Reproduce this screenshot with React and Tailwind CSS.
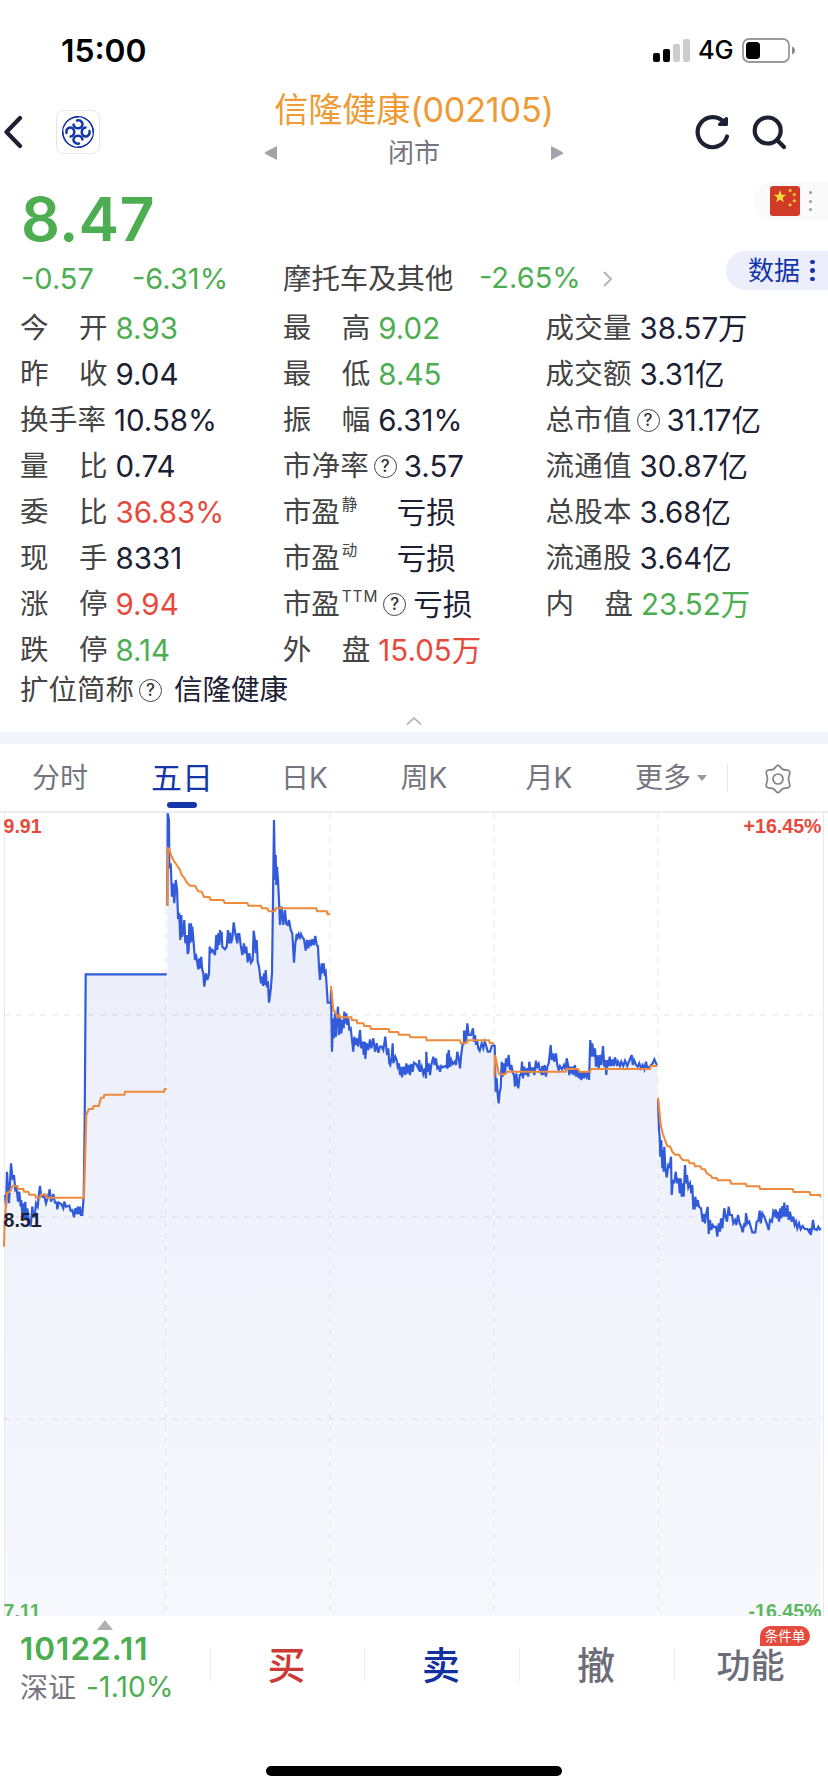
import clsx from 'clsx';

const GREEN = 'text-[#4cae50]';
const RED = 'text-[#e64a3c]';
const DARK = 'text-[#1c2033]';

const columns = [
  [
    { label: '今开', value: '8.93', tone: GREEN },
    { label: '昨收', value: '9.04', tone: DARK },
    { label: '换手率', value: '10.58%', tone: DARK },
    { label: '量比', value: '0.74', tone: DARK },
    { label: '委比', value: '36.83%', tone: RED },
    { label: '现手', value: '8331', tone: DARK },
    { label: '涨停', value: '9.94', tone: RED },
    { label: '跌停', value: '8.14', tone: GREEN }
  ],
  [
    { label: '最高', value: '9.02', tone: GREEN },
    { label: '最低', value: '8.45', tone: GREEN },
    { label: '振幅', value: '6.31%', tone: DARK },
    { label: '市净率', value: '3.57', tone: DARK, help: true },
    { label: '市盈', sup: '静', value: '亏损', tone: DARK },
    { label: '市盈', sup: '动', value: '亏损', tone: DARK },
    { label: '市盈', sup: 'TTM', value: '亏损', tone: DARK, help: true },
    { label: '外盘', value: '15.05万', tone: RED }
  ],
  [
    { label: '成交量', value: '38.57万', tone: DARK },
    { label: '成交额', value: '3.31亿', tone: DARK },
    { label: '总市值', value: '31.17亿', tone: DARK, help: true },
    { label: '流通值', value: '30.87亿', tone: DARK },
    { label: '总股本', value: '3.68亿', tone: DARK },
    { label: '流通股', value: '3.64亿', tone: DARK },
    { label: '内盘', value: '23.52万', tone: GREEN }
  ]
];

// Each day has its own origin, points are in thirds of a pixel
const days = [
  {
    x: 0, y: 1020,
    price: '15,525 18,560 21,455 27,550 33,430 38,480 42,465 46,510 50,505 54,545 58,515 62,560 64,540 67,580 70,550 73,595 76,545 79,600 82,565 86,598 90,600 92,620 97,560 100,590 104,590 108,550 113,560 117,520 120,498 123,525 128,530 132,525 138,550 144,530 149,508 153,545 157,535 160,522 165,548 170,548 172,568 176,548 184,552 190,565 193,545 198,560 208,557 212,572 217,570 222,592 226,565 230,582 233,560 237,583 240,560 243,585 247,585 251,530 254,300 257,-137 500,-137',
    avg: '12,680 14,600 21,518 30,515 33,508 38,498 52,498 54,507 70,507 72,515 85,515 88,524 105,524 108,533 120,533 122,524 138,524 140,533 252,533 259,285 266,267 278,267 281,258 296,258 303,233 311,233 313,224 373,224 375,215 492,215 494,207 500,207'
  },
  {
    x: 0, y: 800,
    price: '502,318 503,40 507,60 508,205 512,190 516,290 519,250 523,310 527,240 531,265 534,350 538,345 541,420 544,345 546,410 550,395 553,360 556,430 560,405 563,462 566,450 568,370 570,430 573,370 575,425 577,380 581,430 585,480 589,470 595,508 598,475 601,505 604,470 606,505 610,520 613,560 618,520 622,540 627,522 629,440 634,455 638,450 645,465 649,405 652,450 655,400 658,435 660,390 662,425 665,395 667,440 675,448 680,440 684,390 687,430 690,398 693,430 697,415 701,367 706,400 712,430 714,402 718,402 722,435 727,465 732,430 735,460 739,440 743,487 748,460 753,488 758,480 761,392 764,415 767,460 770,420 773,485 777,500 783,550 786,530 789,558 792,520 795,555 797,510 800,555 804,550 807,608 812,570 816,520 819,300 822,60 825,240 827,165 829,255 831,200 834,240 838,320 840,375 845,320 850,375 855,330 859,372 863,375 867,360 872,390 877,400 882,488 886,430 890,402 893,412 896,402 900,412 903,402 907,412 912,418 917,452 921,420 925,445 929,420 933,438 937,418 941,435 946,408 950,435 954,440 957,500 960,540 965,490 968,520 971,490 974,520 977,515 980,560 983,608 992,608',
    avg: '502,318 504,145 508,147 513,165 520,180 530,195 540,210 545,225 552,232 560,247 570,257 585,257 590,266 595,274 605,275 612,291 628,291 632,300 670,300 674,309 742,309 746,317 782,317 786,325 802,325 806,334 824,334 827,325 949,325 952,334 980,334 983,343 991,343'
  },
  {
    x: 310, y: 960,
    price: '62,130 63,90 66,275 69,175 72,235 75,160 78,230 80,180 84,140 87,225 91,175 94,220 98,180 101,205 103,155 106,190 109,160 112,195 115,175 118,208 122,205 126,240 130,275 133,230 137,255 141,235 145,260 150,210 154,265 158,245 161,285 165,245 166,297 170,250 175,270 180,238 184,265 190,235 195,275 200,250 205,278 210,260 215,260 220,270 226,230 231,285 235,265 238,310 241,315 245,290 248,250 250,310 256,290 260,300 263,320 267,310 270,345 274,320 276,352 281,320 286,345 289,310 292,340 296,315 300,345 304,312 308,335 312,308 318,312 325,325 328,300 330,335 335,320 340,342 345,325 348,355 349,275 352,335 356,310 360,345 364,315 370,290 374,315 378,295 382,325 386,320 390,335 394,318 399,322 405,318 410,322 412,280 414,325 416,270 420,320 424,300 428,312 434,305 438,315 442,275 447,300 450,325 453,290 458,250 462,250 462,215 468,215 468,245 472,190 476,225 483,225 489,205 492,245 495,225 498,255 501,240 505,265 509,272 515,250 520,265 524,245 528,255 533,275 540,275 545,258 554,255',
    avg: '63,78 66,110 70,150 77,158 82,172 88,165 92,172 124,172 126,181 140,181 142,190 160,190 163,198 180,198 184,207 236,207 238,216 264,216 267,224 298,224 301,232 348,232 350,241 450,241 452,249 470,249 473,241 537,241 540,250 552,250'
  },
  {
    x: 310, y: 960,
    price: '554,255 557,395 560,355 563,405 566,430 569,395 572,385 575,305 578,350 581,310 585,345 588,295 592,320 596,285 600,330 604,315 609,340 612,345 615,380 619,340 622,370 625,385 629,345 633,345 636,305 639,355 643,320 648,345 652,325 655,350 658,305 662,338 666,325 670,325 673,345 678,302 682,320 686,312 690,335 694,340 697,318 700,345 704,315 708,350 712,320 716,310 719,285 722,255 725,300 729,280 733,305 738,280 742,315 746,330 750,318 756,328 762,315 767,330 770,295 774,315 778,345 781,320 785,340 788,320 790,345 795,315 798,350 803,330 807,355 810,335 814,360 818,335 822,355 826,335 830,350 835,335 837,360 841,240 844,290 847,250 851,290 855,265 858,320 862,285 866,325 870,285 874,315 879,258 883,320 886,300 889,345 892,300 895,320 899,290 903,318 908,298 911,318 915,292 921,318 924,305 930,318 934,305 940,318 945,302 952,318 958,302 965,285 968,315 972,300 978,315 983,320 988,310 993,325 998,315 1003,328 1008,305 1012,325 1020,318 1028,310 1033,298 1038,310 1042,315',
    avg: '553,350 555,285 560,310 567,343 586,343 590,335 767,335 769,327 805,327 808,335 840,335 843,327 1020,327 1022,318 1042,318'
  },
  {
    x: 600, y: 1050,
    price: '174,150 177,240 179,260 181,320 184,270 187,355 189,300 191,365 193,290 196,350 200,382 205,345 209,350 213,320 215,435 219,390 223,400 227,365 232,400 236,385 239,430 242,385 245,440 248,400 251,440 255,345 258,400 261,375 265,412 270,400 274,430 277,405 280,475 284,475 286,440 290,470 293,450 297,470 303,475 308,515 312,492 315,520 319,490 323,470 326,552 330,510 334,540 338,525 343,532 348,530 352,560 356,520 360,545 363,505 367,535 373,475 377,500 381,515 386,470 390,495 396,495 400,520 405,510 409,525 414,495 419,520 424,530 428,547 433,520 436,530 438,490 443,520 448,515 452,530 457,547 466,547 470,515 475,512 479,482 482,520 487,490 493,500 500,520 506,540 510,510 516,515 520,485 524,495 527,478 531,505 534,485 537,515 541,475 544,505 547,468 550,500 553,458 556,500 559,475 562,500 562,465 566,510 570,485 575,515 580,500 584,525 588,515 592,535 597,520 602,538 608,528 614,537 622,537 627,545 631,535 632,555 636,535 639,510 643,537 650,540 655,530 659,538 663,535',
    avg: '174,143 178,180 182,225 188,250 195,270 202,288 211,290 217,305 225,314 238,314 242,323 249,331 265,331 269,340 282,340 285,349 301,349 305,357 314,358 320,370 334,378 336,384 350,384 353,391 390,391 394,401 437,401 440,409 478,409 481,417 578,417 581,426 628,426 632,435 660,435 662,442'
  }
];

const toPixels = (day, points) =>
  points.split(' ').map((p) => {
    const [x, y] = p.split(',').map(Number);
    return [day.x + x / 3, day.y + y / 3];
  });

const linePath = (pts) => 'M' + pts.map(([x, y]) => `${x.toFixed(1)} ${y.toFixed(1)}`).join('L');

const areaPath = (pts) => `${linePath(pts)}V1616H${pts[0][0].toFixed(1)}Z`;

const HelpIcon = ({ className }) => (
  <span className={clsx('flex size-[23px] shrink-0 items-center justify-center rounded-full border border-[#444] text-[17px] leading-none font-medium text-[#333]', className)}>
    ?
  </span>
);

const StatusBar = () => (
  <div className="flex h-[88px] items-center justify-between pt-3 pr-[33px] pl-[61px]">
    <span className="pt-0.5 text-[31.800px] leading-none font-semibold text-black">15:00</span>
    <div className="flex items-center">
      <svg className="h-6 w-[38px]" viewBox="0 0 38 24">
        <rect x="0" y="15" width="7" height="9" rx="2" fill="#000" />
        <rect x="10" y="11" width="7" height="13" rx="2" fill="#000" />
        <rect x="20" y="6" width="7" height="18" rx="2" fill="#ccc" />
        <rect x="30" y="1" width="7" height="23" rx="2" fill="#ccc" />
      </svg>
      <span className="ml-[7px] w-[36px] text-[25.500px] leading-none font-medium tracking-[-0.300px] text-black">4G</span>
      <svg className="ml-2 h-[25px] w-[53px]" viewBox="0 0 53 25">
        <rect x="1" y="1" width="46" height="23" rx="6" fill="none" stroke="#999" strokeWidth="1.8" />
        <rect x="4" y="4" width="14" height="17" rx="3.5" fill="#000" />
        <path d="M50 8.5c2 .8 3 2.2 3 4s-1 3.200-3 4z" fill="#888" />
      </svg>
    </div>
  </div>
);

const BrokerLogo = () => (
  <div className="flex size-11 items-center justify-center rounded-lg border border-[#e6e6e8]">
    <svg className="size-[34px]" viewBox="-17 -17 34 34" fill="none" stroke="#1536a8" strokeLinecap="round">
      <circle r="15.400" strokeWidth="1.200" />
      {[0, 90, 180, 270].map((angle) => (
        <g key={angle} transform={`rotate(${angle})`}>
          <path d="M-14.500-5A15.300 15.300 0 0 1 1-15.300A17 17 0 0 0-14.500-5Z" fill="#1536a8" strokeWidth="1" />
          <path d="M-1-11.500C3.500-12.500 6-8 3.500-5.200C1-2.600-4-3.500-4.500-7.500" strokeWidth="2.400" />
        </g>
      ))}
    </svg>
  </div>
);

const Header = () => (
  <div className="flex h-[88px] items-start pr-[41px] pl-1">
    <div className="flex w-[261px] items-center pt-[22px]">
      <svg className="h-[34px] w-5" viewBox="0 0 20 34" fill="none" stroke="#1c2033" strokeWidth="4.200" strokeLinecap="round" strokeLinejoin="round">
        <path d="M16 3L2.500 17L16 31" />
      </svg>
      <div className="ml-8"><BrokerLogo /></div>
    </div>
    <div className="flex w-[298px] flex-col items-center">
      <h1 className="h-11 text-[34.200px] leading-[44px] tracking-[-0.200px] whitespace-nowrap text-[#ee9a35]">信隆健康(002105)</h1>
      <div className="flex h-[41px] w-full items-center justify-between">
        <svg className="h-[14px] w-3" viewBox="0 0 12 14"><path d="M12 0V14L.5 8Q-.5 7 .5 6Z" fill="#a3a4ab" /></svg>
        <span className="text-[26px] leading-none text-[#75757f]">闭市</span>
        <svg className="h-[14px] w-3" viewBox="0 0 12 14"><path d="M0 0V14L11.500 8Q12.500 7 11.500 6Z" fill="#a3a4ab" /></svg>
      </div>
    </div>
    <div className="flex w-[224px] items-center justify-end gap-[20px] pt-[26px]">
      <svg className="size-[36px]" viewBox="0 0 36 36" fill="none" stroke="#1c2033" strokeWidth="4.200" strokeLinecap="round" strokeLinejoin="round">
        <path d="M32 22.500A15 15 0 1 1 29.500 9" />
        <path d="M31.500 4.500V10.500H24.500Z" fill="#1c2033" strokeWidth="3" />
      </svg>
      <svg className="size-[36px]" viewBox="0 0 36 36" fill="none" stroke="#1c2033" strokeWidth="4.200" strokeLinecap="round">
        <circle cx="16.700" cy="16.500" r="13" />
        <path d="M26.500 26.500L33 33" />
      </svg>
    </div>
  </div>
);

const Flag = () => (
  <svg className="size-[30px]" viewBox="0 0 30 30">
    <rect width="30" height="30" rx="3" fill="#d13a26" />
    <path d="M10 4L11.600 8.800H16.200L12.500 11.700L13.900 16.200L10 13.400L6.100 16.200L7.500 11.700L3.800 8.800H8.400Z" fill="#fbdc3c" />
    <g fill="#f8cf3a">
      <path id="star" d="M20 2.300L20.700 3.700L22.200 3.600L21.200 4.800L21.700 6.200L20.200 5.600L19 6.500L19.100 5L17.900 4.100L19.400 3.800Z" />
      <use href="#star" x="4.200" y="4" />
      <use href="#star" x="4.200" y="10.200" />
      <use href="#star" y="14.300" />
    </g>
  </svg>
);

const Dots = ({ className }) => (
  <div className="flex flex-col">
    {[0, 1, 2].map((i) => <span key={i} className={clsx('rounded-full', className)} />)}
  </div>
);

const Summary = () => (
  <div className="flex h-[129px] justify-between">
    <div className="pt-1.5 pl-[21px]">
      <div className={clsx('h-[74px] text-[61px] leading-[74px] font-semibold tracking-[0.2px]', GREEN)}>8.47</div>
      <div className="flex h-[46px] text-[29px] leading-[46px]">
        <span className={clsx('w-[111px]', GREEN)}>-0.57</span>
        <span className={clsx('w-[151px]', GREEN)}>-6.31%</span>
        <span className="w-[196px] text-[28.400px] whitespace-nowrap text-[#444]">摩托车及其他</span>
        <span className={clsx('-mt-px w-[124px]', GREEN)}>-2.65%</span>
        <svg className="mt-[14px] h-[18px] w-[10px]" viewBox="0 0 10 18" fill="none" stroke="#b5b5b8" strokeWidth="2">
          <path d="M1 2L8 9L1 16" />
        </svg>
      </div>
    </div>
    <div className="flex flex-col items-end pt-1.5">
      <div className="flex h-[38px] w-[74px] items-center gap-[8.500px] rounded-l-full bg-[#fafafa] pl-4">
        <Flag />
        <Dots className="my-[2.700px] size-[3px] bg-[#999]" />
      </div>
      <div className="mt-[31px] flex h-[39px] w-[102px] items-center rounded-l-full bg-[#eceefc] pl-[22px] text-[#1536a8]">
        <span className="mr-2.5 text-[26px] leading-none">数据</span>
        <Dots className="my-[2px] size-[4.500px] bg-[#1536a8]" />
      </div>
    </div>
  </div>
);

const Stat = ({ item }) => {
  const { label, sup, value, tone, help } = item;
  return (
    <div className="flex h-[46px] items-center text-[28.500px] leading-[46px] whitespace-nowrap">
      {sup ? (
        <span className={clsx('flex text-[#444]', !help && 'w-[106px]')}>
          {label}
          <span className="-mt-[7px] ml-0.5 text-[15.500px] tracking-[0.800px]">{sup}</span>
        </span>
      ) : (
        <span className={clsx('flex justify-between text-[#444]', label.length === 2 ? 'w-[87.500px]' : 'w-[86px]')}>
          {[...label].map((ch) => <span key={ch}>{ch}</span>)}
        </span>
      )}
      {help && <HelpIcon className="ml-[5px]" />}
      <span className={clsx('text-[29.500px]', help ? 'ml-[7px]' : 'ml-2', tone)}>{value}</span>
    </div>
  );
};

const Stats = () => (
  <div className="pl-[20px]">
    <div className="flex h-[368px]">
      {columns.map((items, i) => (
        <div key={i} className="w-[262.800px]">
          {items.map((item, j) => <Stat key={j} item={item} />)}
        </div>
      ))}
    </div>
    <div className="flex h-[34px] items-center text-[28.500px] leading-[34px]">
      <span className="text-[#444]">扩位简称</span>
      <HelpIcon className="ml-[5px]" />
      <span className={clsx('ml-3', DARK)}>信隆健康</span>
    </div>
    <div className="-ml-[20px] flex h-[25px] justify-center pt-[9px]">
      <svg className="h-[10px] w-4" viewBox="0 0 16 10" fill="none" stroke="#aaa" strokeWidth="1.600">
        <path d="M1 8.500L8 2L15 8.500" />
      </svg>
    </div>
  </div>
);

const Tabs = () => (
  <div className="flex h-[69px] border-b-2 border-[#ececee] text-[28px] leading-[68px] text-[#75757f]">
    <span className="w-[120px] text-center">分时</span>
    <div className="flex w-[124px] flex-col items-center">
      <span className="h-[58px] text-[31px] text-[#1536a8]">五日</span>
      <span className="h-1.5 w-[30px] rounded-[3px] bg-[#1536a8]" />
    </div>
    <span className="w-[121px] text-center">日K</span>
    <span className="w-[118px] text-center">周K</span>
    <span className="w-[132px] text-center">月K</span>
    <div className="flex w-[112px] items-center pl-5">
      更多
      <svg className="ml-1.5 h-1.5 w-[10px]" viewBox="0 0 10 6"><path d="M0 0H10L5 6Z" fill="#999" /></svg>
    </div>
    <div className="my-5 w-[50px] border-l border-[#e6e6ea]" />
    <div className="flex items-center">
      <svg className="mt-0.5 ml-[-14px] size-[30px]" viewBox="0 0 30 30" fill="none" stroke="#808085" strokeWidth="1.700" strokeLinejoin="round">
        <circle cx="15" cy="15" r="5" />
        <path d="M12.500 3.200Q15-.5 17.500 3.200Q19.500 6.300 23.200 5.900Q27.700 6 26.600 10.200Q24.500 15 26.600 19.800Q27.700 24 23.200 24.100Q19.500 23.700 17.500 26.800Q15 30.500 12.500 26.800Q10.500 23.700 6.800 24.100Q2.300 24 3.400 19.800Q5.500 15 3.400 10.200Q2.300 6 6.800 5.900Q10.500 6.300 12.500 3.200Z" />
      </svg>
    </div>
  </div>
);

const Chart = () => (
  <svg className="block h-[803px] w-full" viewBox="0 813 828 803" fill="none">
    <defs>
      <linearGradient id="area" x1="0" y1="812" x2="0" y2="1616" gradientUnits="userSpaceOnUse">
        <stop offset="0" stopColor="#e9edfa" />
        <stop offset="1" stopColor="#f7f8fd" />
      </linearGradient>
    </defs>
    {days.map((day, i) => (
      <path key={i} d={areaPath(toPixels(day, day.price))} fill="url(#area)" />
    ))}
    <path d="M4.500 812V1616M823.500 812V1616" stroke="#e8e8ee" />
    <g stroke="#000" strokeOpacity="0.045" strokeWidth="2" strokeDasharray="6 6">
      {[166, 330, 494, 658].map((x) => <path key={x} d={`M${x} 813V1616`} />)}
      {[1015, 1217, 1419].map((y) => <path key={y} d={`M4 ${y}H823`} />)}
    </g>
    {days.map((day, i) => (
      <path key={i} d={linePath(toPixels(day, day.price))} stroke="#325bd9" strokeWidth="2.200" />
    ))}
    {days.map((day, i) => (
      <path key={i} d={linePath(toPixels(day, day.avg))} stroke="#ee8a3c" strokeWidth="2.100" />
    ))}
    <g className="font-['Liberation_Sans'] text-[19.600px] font-bold">
      <text x="3.500" y="832.500" fill="#e64a3c">9.91</text>
      <text x="821.500" y="832.500" textAnchor="end" fill="#e64a3c">+16.45%</text>
      <text x="3.500" y="1226.500" fill="#1c2033">8.51</text>
      <text x="3.500" y="1618" fill="#5cb860">7.11</text>
      <text x="821.500" y="1618" textAnchor="end" fill="#5cb860">-16.45%</text>
    </g>
  </svg>
);

const BottomBar = () => (
  <div className="relative flex h-[150px] pt-8">
    <svg className="absolute top-1 left-[97px] h-[10px] w-4" viewBox="0 0 16 10"><path d="M8 0L16 10H0Z" fill="#b0b0b2" /></svg>
    <div className="-mt-4 w-[210px] pl-5">
      <div className={clsx('h-[34px] text-[31.500px] leading-[34px] font-semibold tracking-[1px]', GREEN)}>10122.11</div>
      <div className="mt-0.5 flex h-10 text-[28px] leading-[40px] text-[#75757f]">
        深证<span className={clsx('-mt-px ml-2.5 tracking-[0.200px]', GREEN)}>-1.10%</span>
      </div>
    </div>
    <div className="flex h-[33px] text-[38px] leading-[35px] font-medium">
      <span className="w-[154px] border-l border-[#ececf0] pr-0.5 text-center text-[#cb3a35]">买</span>
      <span className="w-[155px] border-l border-[#ececf0] pr-0.5 text-center text-[#1230a0]">卖</span>
      <span className="w-[155px] border-l border-[#ececf0] pr-0.5 text-center text-[#6d6d79]">撤</span>
      <div className="relative w-[152px] border-l border-[#ececf0] text-center text-[34px] text-[#6d6d79]">
        功能
        <span className="absolute -top-[22px] left-[85px] h-5 w-[50px] rounded-full rounded-bl-none bg-[#e64a3c] text-[13.500px] leading-5 font-normal text-white">条件单</span>
      </div>
    </div>
  </div>
);

const App = () => {
  return (
    <div className="h-[1792px] w-[828px] overflow-hidden bg-white font-[Inter,'Noto_Sans_CJK_SC',sans-serif]">
      <StatusBar />
      <Header />
      <Summary />
      <Stats />
      <div className="h-3 bg-[#f4f5fa]" />
      <Tabs />
      <Chart />
      <BottomBar />
      <div className="mx-auto h-[10px] w-[296px] rounded-full bg-black" />
    </div>
  );
};

export default App;
